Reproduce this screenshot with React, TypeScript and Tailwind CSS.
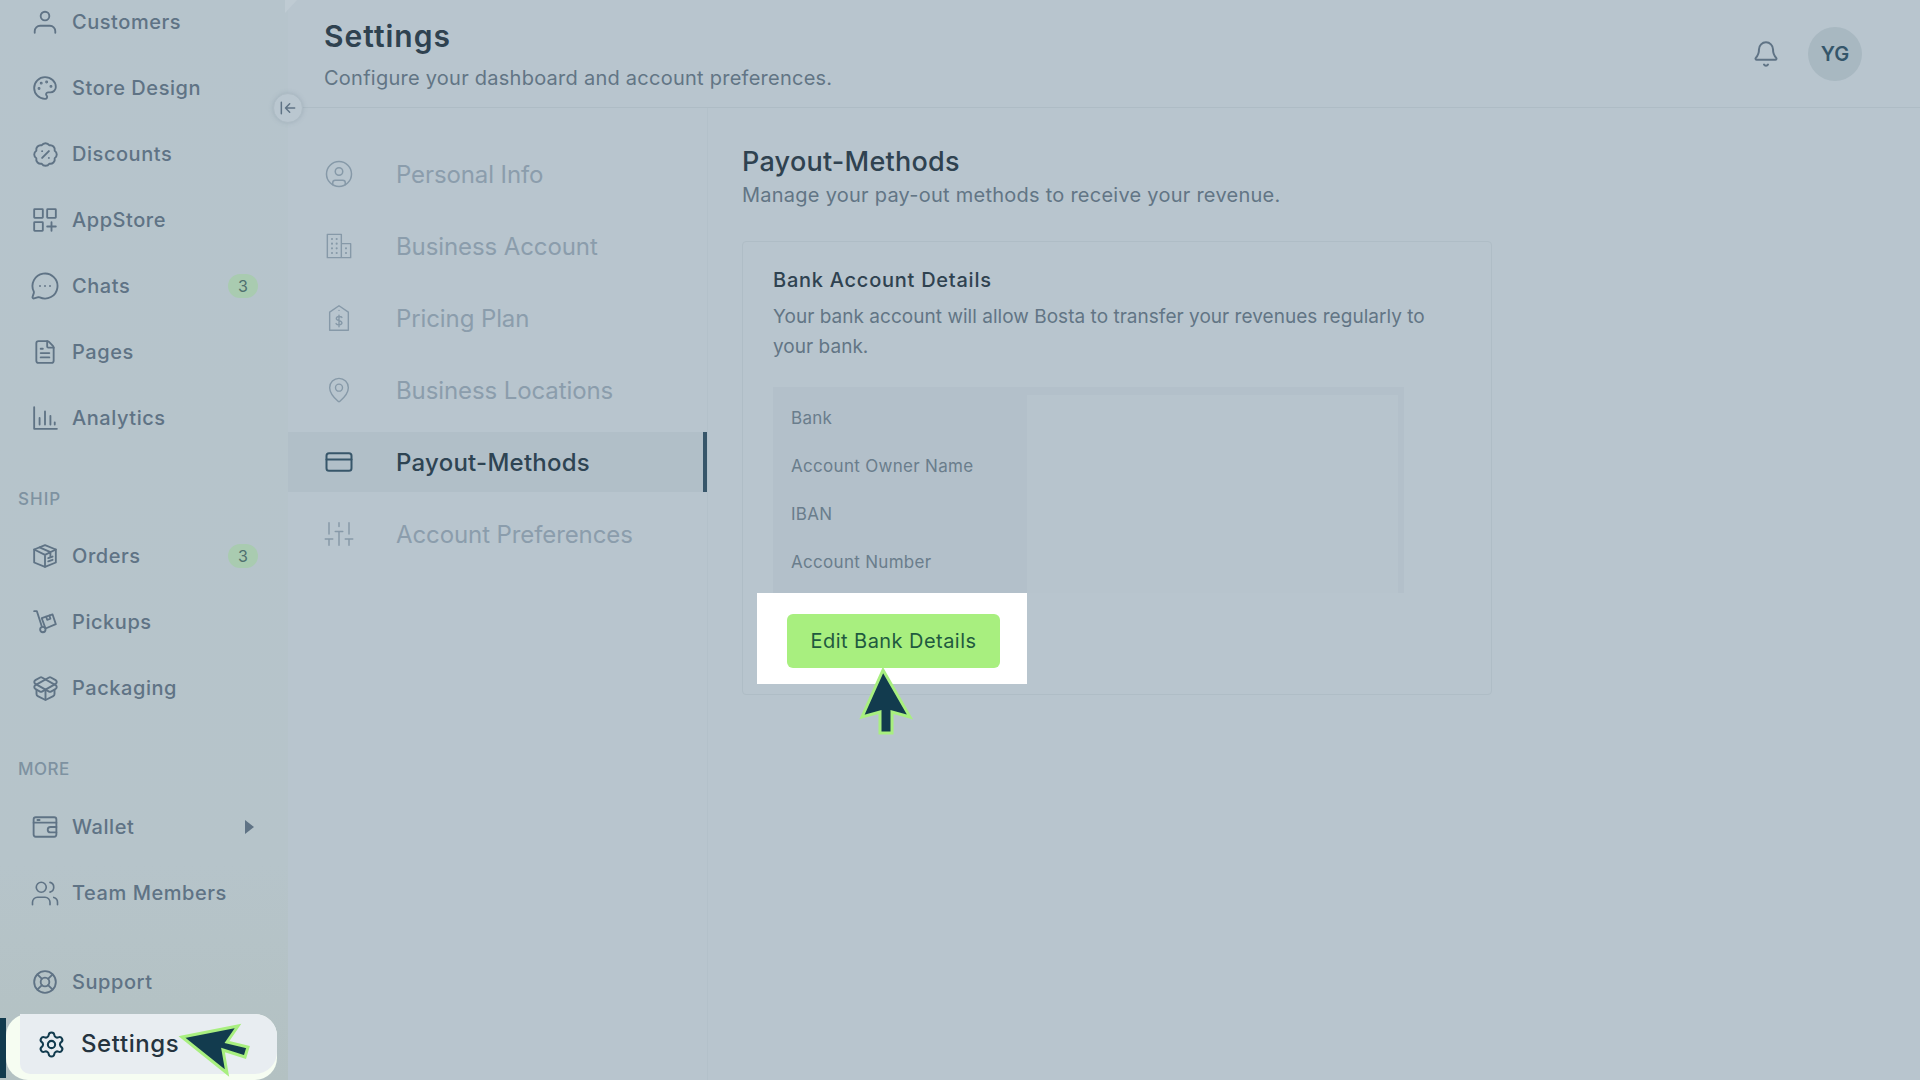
import type { ReactNode } from 'react'
import {
  Bell,
  BadgePercent,
  CircleUser,
  CreditCard,
  FileText,
  LifeBuoy,
  MapPin,
  MessageCircleMore,
  PackageOpen,
  Palette,
  Settings,
  Users,
} from 'lucide-react'

function Svg({ size = 26, sw = 1.7, children }: { size?: number; sw?: number; children: ReactNode }) {
  return (
    <svg width={size} height={size} viewBox="0 0 24 24" fill="none" stroke="currentColor" strokeWidth={sw} strokeLinecap="round" strokeLinejoin="round">
      {children}
    </svg>
  )
}

const UserIcon = () => (
  <Svg>
    <circle cx="12" cy="6.5" r="4" />
    <path d="M2.5 22v-1.500a5 5 0 0 1 5-5h9a5 5 0 0 1 5 5V22" />
  </Svg>
)
const AppsIcon = () => (
  <Svg>
    <rect x="2" y="2" width="8" height="8" rx="0.5" />
    <rect x="14" y="2" width="8" height="8" rx="0.5" />
    <rect x="2" y="14" width="8" height="8" rx="0.5" />
    <path d="M18 14v8M14 18h8" />
  </Svg>
)
const ChartIcon = () => (
  <Svg>
    <path d="M2 2v20h21M7 18v-6M12 18V6M17 18v-8M21 18v-2" />
  </Svg>
)
const BoxIcon = () => (
  <Svg>
    <path d="M12 2 22 6v12l-10 4-10-4V6z" />
    <path d="M2 6l10 5 10-5M12 11v11M7 4l10 4.500v4" />
    <path d="M15 14l4-1.500M15 17l4-1.500" />
  </Svg>
)
const TruckIcon = () => (
  <Svg>
    <path d="M2 2h2.500l4.500 14" />
    <circle cx="10" cy="19" r="2.500" />
    <path d="M12.500 18 22 14l-3-9-10 3.500z" />
    <path d="M13 7l1 3 3-1-1-3" />
  </Svg>
)
const WalletIcon = () => (
  <Svg>
    <rect x="1.500" y="3" width="21" height="18" rx="2" />
    <path d="M1.500 8h21M5 5.500h2M22.500 12H17a2.500 2.500 0 0 0 0 5h5.500" />
  </Svg>
)
const BuildingIcon = () => (
  <Svg size={28} sw={1.2}>
    <path d="M2 22V2h12v20M14 10h8v12H2" />
    <path d="M6 6h.01M10 6h.01M6 10h.01M10 10h.01M6 14h.01M10 14h.01M6 18h.01M10 18h.01M18 14h.01M18 18h.01" strokeWidth="1.800" />
  </Svg>
)
const PriceTagIcon = () => (
  <Svg size={28} sw={1.2}>
    <path d="M12 1.500 4 7v15.500h16V7z" />
    <path d="M12 5.500h.01" />
    <path d="M14.500 11.500c-.5-1-4.500-1.500-4.800.8-.3 2.400 5 1.500 4.800 4-.2 2.200-4.300 1.700-5 .5M12 9.500v10" />
  </Svg>
)
const SlidersIcon = () => (
  <Svg size={30} sw={1.2}>
    <path d="M4 3v9M4 16v5M1 16h6M12 3v3M12 10v11M9 10h6M20 3v9M20 16v5M17 16h6" />
  </Svg>
)
const CollapseIcon = () => (
  <Svg size={20} sw={1.8}>
    <path d="M4 5v14M20 12H9M14 7l-5 5 5 5" />
  </Svg>
)

const group1 = [
  { label: 'Customers', icon: <UserIcon /> },
  { label: 'Store Design', icon: <Palette size={26} strokeWidth={1.7} /> },
  { label: 'Discounts', icon: <BadgePercent size={27} strokeWidth={1.7} /> },
  { label: 'AppStore', icon: <AppsIcon /> },
  { label: 'Chats', icon: <MessageCircleMore size={32} strokeWidth={1.5} />, badge: '3' },
  { label: 'Pages', icon: <FileText size={26} strokeWidth={1.7} /> },
  { label: 'Analytics', icon: <ChartIcon /> },
]

const group2 = [
  { label: 'Orders', icon: <BoxIcon />, badge: '3' },
  { label: 'Pickups', icon: <TruckIcon /> },
  { label: 'Packaging', icon: <PackageOpen size={27} strokeWidth={1.7} /> },
]

const settingsTabs = [
  { label: 'Personal Info', icon: <CircleUser size={30} strokeWidth={1.2} /> },
  { label: 'Business Account', icon: <BuildingIcon /> },
  { label: 'Pricing Plan', icon: <PriceTagIcon /> },
  { label: 'Business Locations', icon: <MapPin size={28} strokeWidth={1.2} /> },
  { label: 'Payout-Methods', icon: <CreditCard size={30} strokeWidth={1.6} />, active: true },
  { label: 'Account Preferences', icon: <SlidersIcon /> },
]

const bankFields = ['Bank', 'Account Owner Name', 'IBAN', 'Account Number']

function NavItem({ label, icon, badge, arrow }: { label: string; icon: ReactNode; badge?: string; arrow?: boolean }) {
  return (
    <div className="flex h-[66px] items-center pl-[30px] pr-[30px] text-[#5f7385]">
      <span className="flex w-[30px] shrink-0 items-center justify-center">{icon}</span>
      <span className="ml-[12px] flex-1 text-[20px] font-medium tracking-[0.55px]">{label}</span>
      {badge && (
        <span className="flex h-[24px] w-[30px] items-center justify-center rounded-full bg-[#a9cbb0] text-[16px] text-[#4f6f6e]">
          {badge}
        </span>
      )}
      {arrow && <span className="mr-[4px] h-0 w-0 border-y-[7px] border-l-[9px] border-y-transparent border-l-[#5f7385]" />}
    </div>
  )
}

export default function App() {
  return (
    <div className="relative flex h-[1080px] w-[1920px] overflow-hidden bg-[#b8c5ce] font-['Inter',sans-serif]">
      {/* Sidebar */}
      <aside className="flex w-[288px] shrink-0 flex-col bg-gradient-to-b from-[#b6c4cc] via-[#b6c4ca] via-80% to-[#b3c1c2]">
        <div className="-mt-[11px]">
          {group1.map((item) => (
            <NavItem key={item.label} {...item} />
          ))}
        </div>
        <div className="mt-[38px] h-[20px] pl-[18px] text-[17px] font-medium leading-[20px] tracking-[1px] text-[#7e92a1]">SHIP</div>
        <div className="mt-[14px]">
          {group2.map((item) => (
            <NavItem key={item.label} {...item} />
          ))}
        </div>
        <div className="mt-[38px] h-[20px] pl-[18px] text-[17px] font-medium leading-[20px] tracking-[0.5px] text-[#7e92a1]">MORE</div>
        <div className="mt-[15px]">
          <NavItem label="Wallet" icon={<WalletIcon />} arrow />
          <NavItem label="Team Members" icon={<Users size={31} strokeWidth={1.3} />} />
        </div>
        <div className="h-px bg-[#a3b2b9]" />
        <div className="mt-[23px]">
          <NavItem label="Support" icon={<LifeBuoy size={26} strokeWidth={1.7} />} />
        </div>
        <div className="-mt-px flex h-[66px] items-start">
          <div className="mt-[4px] h-[60px] w-[6px] bg-[#123b4e]" />
          <div className="h-[66px] w-[271px] rounded-[22px] bg-[#f6fdf2] pl-[14px]">
            <div className="flex h-[60px] items-center rounded-r-[22px] rounded-bl-[10px] bg-[#e8edf1] pl-[17px] text-[#123b4e]">
              <Settings size={29} strokeWidth={1.7} />
              <span className="ml-[15px] text-[24px] font-medium tracking-[0.6px] text-[#25343f]">Settings</span>
            </div>
          </div>
        </div>
      </aside>

      {/* Main */}
      <main className="flex min-w-0 flex-1 flex-col">
        <header className="flex h-[108px] shrink-0 items-start justify-between border-b border-[#aebcc5] pl-[36px] pr-[58px]">
          <div>
            <h1 className="mt-[17px] text-[30px] font-semibold leading-[38px] tracking-[1px] text-[#2f4250]">Settings</h1>
            <p className="mt-[8px] text-[20px] leading-[30px] tracking-[0.25px] text-[#627585]">Configure your dashboard and account preferences.</p>
          </div>
          <div className="mt-[27px] flex items-center gap-[28px]">
            <Bell size={28} strokeWidth={1.7} className="text-[#5f7385]" />
            <div className="flex h-[54px] w-[54px] items-center justify-center rounded-full bg-[#a8b8c1] text-[20px] font-semibold text-[#35566a]">
              YG
            </div>
          </div>
        </header>

        <div className="flex flex-1">
          {/* Settings tabs */}
          <nav className="w-[420px] shrink-0 border-r border-[#b3c1ca] pt-[36px]">
            {settingsTabs.map((tab) => (
              <div
                key={tab.label}
                className={
                  tab.active
                    ? 'mb-[12px] flex h-[60px] items-center border-r-4 border-[#37566a] bg-[#b1bfc8] pl-[36px] text-[#37566a]'
                    : 'mb-[12px] flex h-[60px] items-center pl-[36px] text-[#8699a8]'
                }
              >
                <span className="flex w-[30px] shrink-0 items-center justify-center">{tab.icon}</span>
                <span className={tab.active ? 'ml-[42px] mt-px text-[24px] font-medium tracking-[0.25px] text-[#2e4453]' : 'ml-[42px] mt-px text-[24px] tracking-[-0.1px] text-[#8b9dac]'}>
                  {tab.label}
                </span>
              </div>
            ))}
          </nav>

          {/* Payout methods */}
          <section className="pl-[34px] pt-[36px]">
            <h2 className="text-[27px] font-medium leading-[36px] tracking-[0.25px] text-[#2f4250]">Payout-Methods</h2>
            <p className="text-[20px] leading-[30px] tracking-[0.25px] text-[#627585]">Manage your pay-out methods to receive your revenue.</p>

            <div className="mt-[31px] h-[454px] w-[750px] rounded-[4px] border border-[#afbdc6] px-[30px] pt-[23px]">
              <h3 className="text-[20px] font-medium leading-[30px] tracking-[0.75px] text-[#2f4250]">Bank Account Details</h3>
              <p className="mt-[7px] w-[680px] text-[19px] leading-[30px] tracking-[0.03px] text-[#627585]">
                Your bank account will allow Bosta to transfer your revenues regularly to your bank.
              </p>

              <div className="mt-[25px] flex h-[206px] w-[631px] bg-[#b3c0ca]">
                <div className="w-[254px] pt-[8px]">
                  {bankFields.map((field) => (
                    <div key={field} className="flex h-[48px] items-center pl-[18px] text-[17px] tracking-[0.3px] text-[#6a7d8c]">
                      {field}
                    </div>
                  ))}
                </div>
                <div className="mt-[8px] w-[371px] bg-[#b7c4cd]" />
              </div>

              <div className="-ml-[16px] flex h-[91px] w-[270px] items-center bg-white pl-[30px]">
                <button className="mt-[5px] h-[54px] w-[213px] rounded-[6px] bg-[#a8ef7f] text-[20px] tracking-[0.45px] text-[#1f5a3f]">
                  Edit Bank Details
                </button>
              </div>
            </div>
          </section>
        </div>
      </main>

      {/* Collapse button */}
      <div className="absolute left-[273px] top-[93px] flex h-[30px] w-[30px] items-center justify-center rounded-full border border-[#aebcc5] bg-[#bac7d0] text-[#5f7385] shadow-[0_0_4px_rgba(120,140,155,0.35)]">
        <CollapseIcon />
      </div>

      {/* Tutorial cursors and the sliver of the panel corner */}
      <svg className="absolute left-0 top-0" width="1920" height="1080" fill="#123b4e" stroke="#a8ef7f" strokeWidth="3" strokeLinejoin="miter">
        <polygon points="285,0 297,0 285,13" fill="#bfcbd3" stroke="none" />
        <polygon points="883,670 862,717 880,712 880,733 892,733 892,712 910,717" />
        <polygon points="182,1037 238,1026 227,1042 248,1047 245,1057 223,1050 227,1073" />
      </svg>
    </div>
  )
}
